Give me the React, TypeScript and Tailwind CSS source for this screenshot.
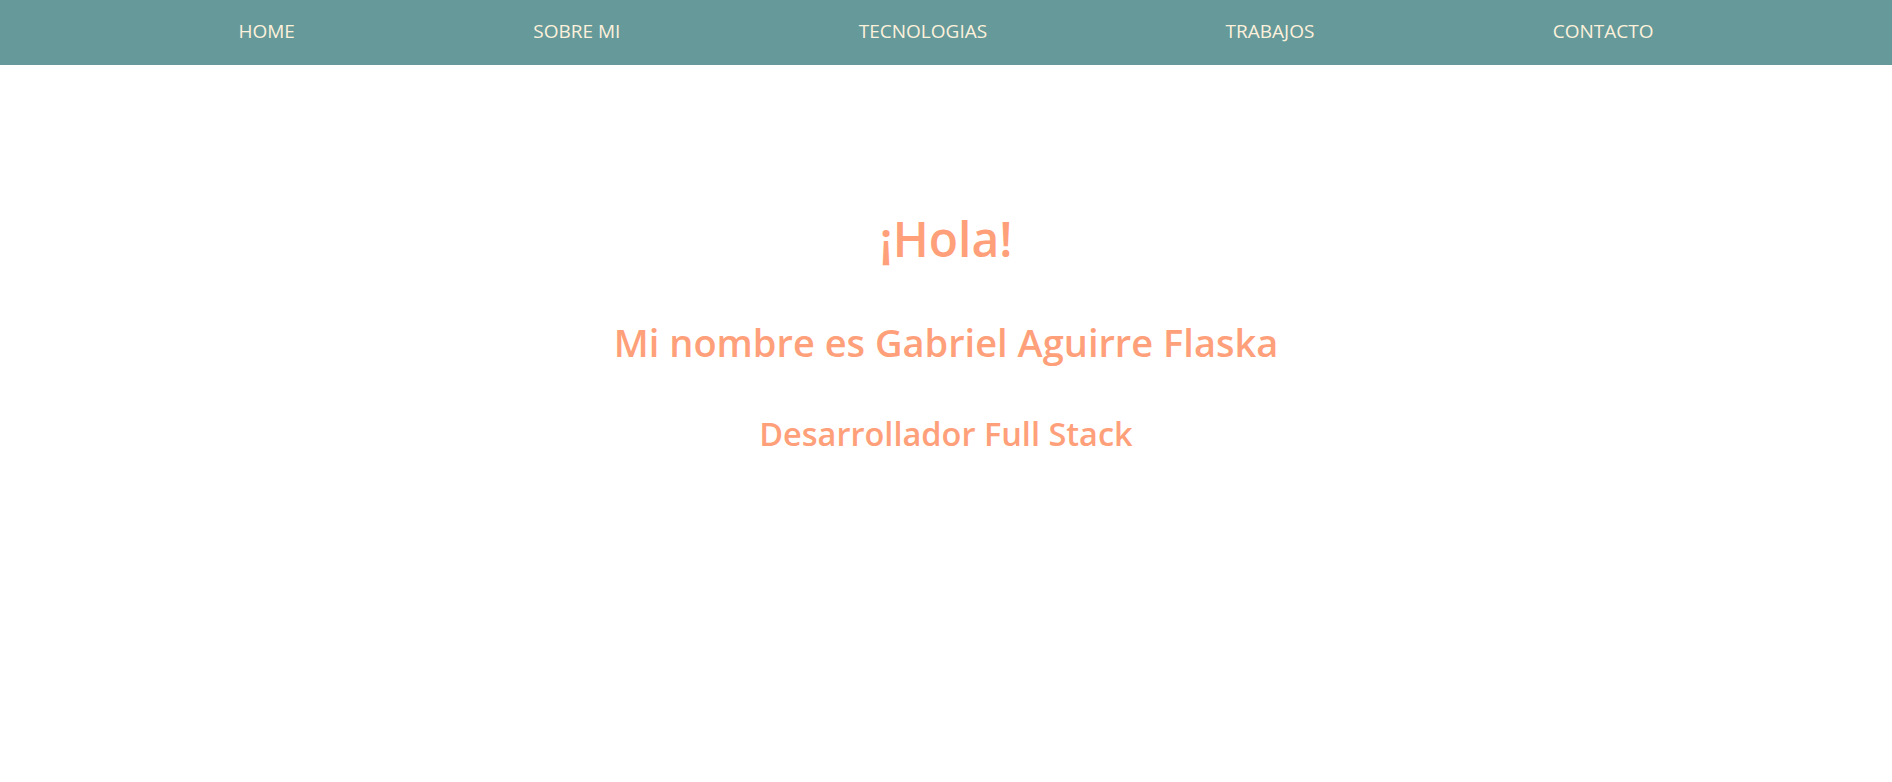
const links = ["HOME", "SOBRE MI", "TECNOLOGIAS", "TRABAJOS", "CONTACTO"];

export default function App() {
  return (
    <div className="min-h-screen bg-white font-['Open_Sans',sans-serif]">
      <nav className="h-[65px] bg-[#669999] flex items-center justify-evenly">
        {links.map((l) => (
          <a key={l} href="#" className="text-[19px] text-[#fdf1dc] leading-none -mt-[2px]">
            {l}
          </a>
        ))}
      </nav>

      <main className="flex flex-col items-center text-center text-[#ffa07a] font-semibold pt-[150px]">
        <h1 className="text-[48px] leading-none">¡Hola!</h1>
        <h2 className="text-[38px] leading-none mt-[60px]">
          Mi nombre es Gabriel Aguirre Flaska
        </h2>
        <h3 className="text-[32.5px] leading-none mt-[57px]">Desarrollador Full Stack</h3>
      </main>
    </div>
  );
}
